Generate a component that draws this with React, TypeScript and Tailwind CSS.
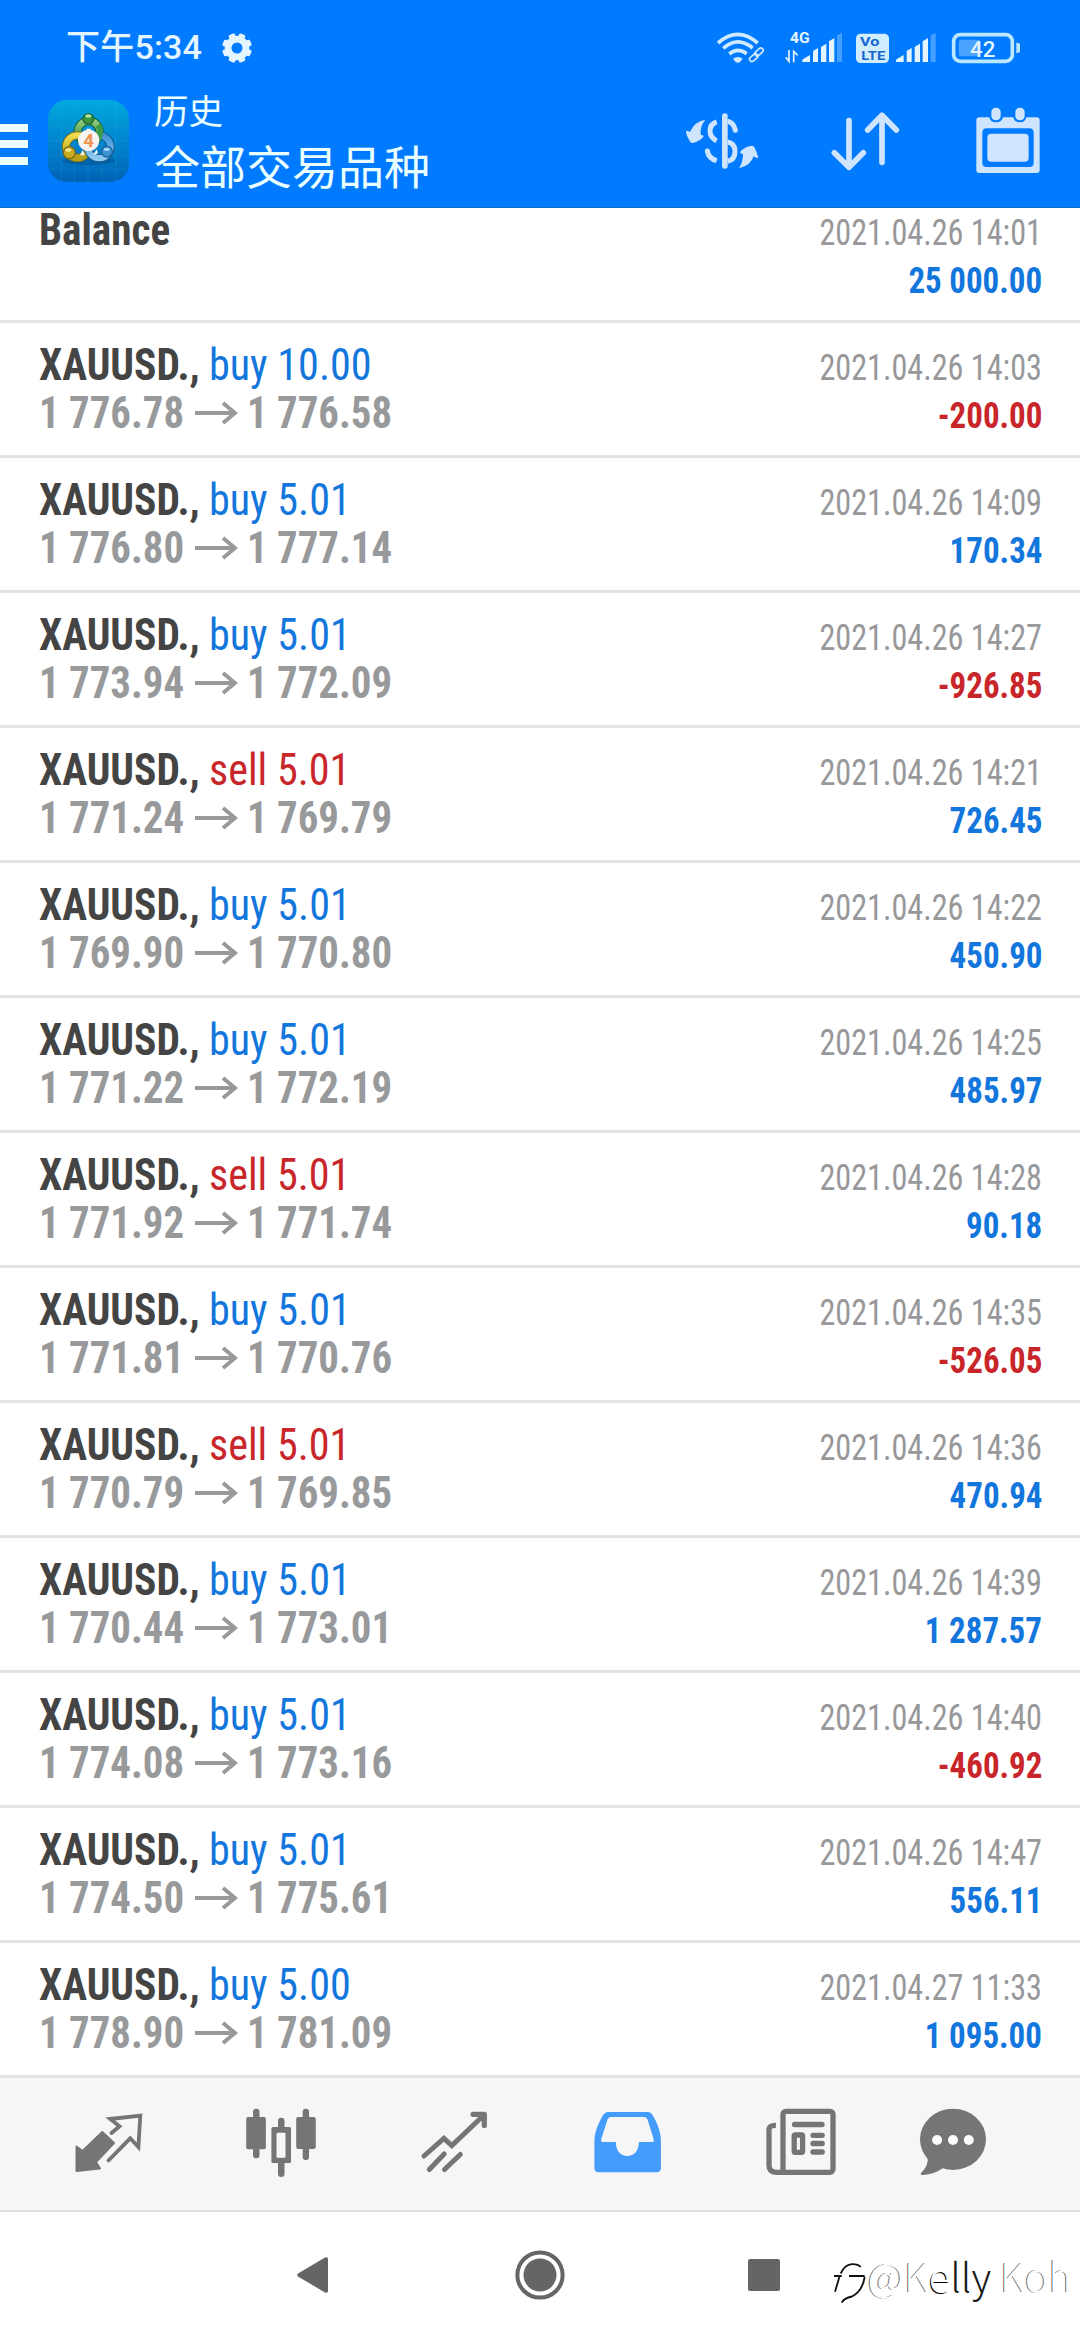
type Deal = {
  side: "buy" | "sell";
  volume: string;
  open: string;
  close: string;
  time: string;
  profit: string;
};

const deals: Deal[] = [
  { side: "buy", volume: "10.00", open: "1 776.78", close: "1 776.58", time: "2021.04.26 14:03", profit: "-200.00" },
  { side: "buy", volume: "5.01", open: "1 776.80", close: "1 777.14", time: "2021.04.26 14:09", profit: "170.34" },
  { side: "buy", volume: "5.01", open: "1 773.94", close: "1 772.09", time: "2021.04.26 14:27", profit: "-926.85" },
  { side: "sell", volume: "5.01", open: "1 771.24", close: "1 769.79", time: "2021.04.26 14:21", profit: "726.45" },
  { side: "buy", volume: "5.01", open: "1 769.90", close: "1 770.80", time: "2021.04.26 14:22", profit: "450.90" },
  { side: "buy", volume: "5.01", open: "1 771.22", close: "1 772.19", time: "2021.04.26 14:25", profit: "485.97" },
  { side: "sell", volume: "5.01", open: "1 771.92", close: "1 771.74", time: "2021.04.26 14:28", profit: "90.18" },
  { side: "buy", volume: "5.01", open: "1 771.81", close: "1 770.76", time: "2021.04.26 14:35", profit: "-526.05" },
  { side: "sell", volume: "5.01", open: "1 770.79", close: "1 769.85", time: "2021.04.26 14:36", profit: "470.94" },
  { side: "buy", volume: "5.01", open: "1 770.44", close: "1 773.01", time: "2021.04.26 14:39", profit: "1 287.57" },
  { side: "buy", volume: "5.01", open: "1 774.08", close: "1 773.16", time: "2021.04.26 14:40", profit: "-460.92" },
  { side: "buy", volume: "5.01", open: "1 774.50", close: "1 775.61", time: "2021.04.26 14:47", profit: "556.11" },
  { side: "buy", volume: "5.00", open: "1 778.90", close: "1 781.09", time: "2021.04.27 11:33", profit: "1 095.00" },
];

const gearTeeth = [22.5, 67.5, 112.5, 157.5, 202.5, 247.5, 292.5, 337.5];

const SignalBars = ({ x }: { x: number }) => (
  <g transform={`translate(${x} 0)`}>
    <path d="M0 186V182Q0 178 4 176L23 165V186Z" />
    <path d="M32 186V153L47 144V186Z" />
    <path d="M56 186V141L72 131V186Z" />
    <path d="M80 186V124L96 114V186Z" />
    <path d="M104 186V106L119 98V186Z" opacity=".3" />
  </g>
);

const StatusBar = () => (
  <div className="flex h-[94px] items-center pl-[66px] pr-[59px] text-[#e4f5ff]">
    <span className="font-['Roboto','Noto_Sans_CJK_SC',sans-serif] text-[34px] leading-none font-medium tracking-[0.2px]">下午5:34</span>
    <svg className="mt-[2px] ml-[19px] h-8 w-8" viewBox="-16 -16 32 32" fill="currentColor">
      <circle r="8.900" fill="none" stroke="currentColor" strokeWidth="6.800" />
      {gearTeeth.map((angle) => (
        <rect key={angle} x="-3.300" y="-14.900" width="6.600" height="5" rx="1.500" transform={`rotate(${angle})`} />
      ))}
    </svg>
    <div className="ml-auto flex items-center">
      <svg className="h-[34px] w-[49px]" viewBox="228 90 147 102" fill="none" stroke="#cfe9ff" strokeWidth="11">
        <path d="M234 129Q293 77 353 129M250 145Q293 107 338 144M268 162Q293 141 320 161" />
        <path d="M279 176Q293 166 308 176L300 186Q294 191 287 186Z" fill="#cfe9ff" stroke="none" />
        <g strokeWidth="5">
          <rect x="-14" y="-7" width="28" height="14" rx="7" transform="translate(341 173) rotate(-42)" />
          <rect x="-14" y="-7" width="28" height="14" rx="7" transform="translate(357 156) rotate(-42)" />
        </g>
      </svg>
      <svg className="ml-5 h-[34px] w-[58px]" viewBox="435 90 174 102" fill="currentColor">
        <text x="450" y="128" fontSize="44" fontWeight="700" fontFamily="Roboto" textLength="59" lengthAdjust="spacingAndGlyphs">4G</text>
        <path d="M447 150V184L437 172M461 187V154L473 166" fill="none" stroke="currentColor" strokeWidth="5" />
        <SignalBars x={487} />
      </svg>
      <svg className="ml-3 h-[34px] w-[35px]" viewBox="645 90 105 102" fill="#d0ecff">
        <rect x="648" y="101" width="99" height="88" rx="14" />
        <g fill="#1768cf" fontFamily="Roboto" fontWeight="700">
          <text x="660" y="139" fontSize="38" textLength="58" lengthAdjust="spacingAndGlyphs">Vo</text>
          <text x="664" y="180" fontSize="41" textLength="72" lengthAdjust="spacingAndGlyphs">LTE</text>
        </g>
      </svg>
      <svg className="ml-[5px] h-[34px] w-[42px]" viewBox="765 90 126 102" fill="currentColor">
        <SignalBars x={768} />
      </svg>
      <svg className="ml-[14px] h-[34px] w-[70px]" viewBox="933 90 210 102" fill="#b9e8ff">
        <rect x="941" y="104" width="176" height="80" rx="20" fill="none" stroke="#b9e8ff" strokeWidth="11" />
        <rect x="956" y="119" width="64" height="50" rx="7" fill="#4ba3ff" />
        <path d="M1129 128H1133Q1140 128 1140 135V152Q1140 159 1133 159H1129Z" />
        <text x="990" y="170" fontSize="65" fontWeight="500" fontFamily="Roboto" fill="#e4f5ff" textLength="76" lengthAdjust="spacingAndGlyphs">42</text>
      </svg>
    </div>
  </div>
);

const AppLogo = () => (
  <svg className="ml-5 h-[82px] w-[81px]" viewBox="0 0 243 246">
    <defs>
      <linearGradient id="tile" x1="0" y1="0" x2="0" y2="1">
        <stop offset="0" stopColor="#00a9de" />
        <stop offset=".55" stopColor="#0082cc" />
        <stop offset="1" stopColor="#0062b4" />
      </linearGradient>
      <linearGradient id="green" x1="0" y1="0" x2="0" y2="1">
        <stop offset="0" stopColor="#93c97c" />
        <stop offset="1" stopColor="#2f8a35" />
      </linearGradient>
      <linearGradient id="yellow" x1="0" y1="0" x2="0" y2="1">
        <stop offset="0" stopColor="#eedb4e" />
        <stop offset="1" stopColor="#b8a018" />
      </linearGradient>
      <linearGradient id="blue" x1="0" y1="0" x2="0" y2="1">
        <stop offset="0" stopColor="#3d93d5" />
        <stop offset="1" stopColor="#8cc8f0" />
      </linearGradient>
    </defs>
    <rect width="243" height="246" rx="56" fill="url(#tile)" />
    <path d="M40 3V243M79 0V246M120 0V246M162 0V246M203 3V243M0 79H243M0 122H243M0 166H243M8 208H235" stroke="#3cc0e8" strokeOpacity=".25" strokeWidth="2" />
    <ellipse cx="122" cy="182" rx="80" ry="13" fill="#003c78" opacity=".35" />
    <g fill="none" strokeWidth="25">
      <circle cx="122" cy="96" r="33" stroke="#185f32" />
      <circle cx="122" cy="96" r="33" stroke="url(#green)" strokeWidth="19" />
      <circle cx="88" cy="140" r="34" stroke="#77701c" />
      <circle cx="88" cy="140" r="34" stroke="url(#yellow)" strokeWidth="19" />
      <path d="M160 107A34 34 0 1 1 120 146" stroke="#145a8c" />
      <path d="M160 107A34 34 0 1 1 120 146" stroke="url(#blue)" strokeWidth="19" />
      <path d="M150 75A33 33 0 0 1 150 116" stroke="#3b9a45" strokeWidth="17" />
    </g>
    <path d="M96 165L104 150L110 166ZM136 164L146 148L150 160ZM114 86H130L122 96Z" fill="#f2f6fa" />
    <circle cx="121" cy="57" r="16" fill="#39963c" stroke="#1d6736" strokeWidth="4" />
    <ellipse cx="121" cy="48" rx="9" ry="5" fill="#b8e2a6" />
    <circle cx="64" cy="158" r="18" fill="#c9ab20" stroke="#7b6c19" strokeWidth="4" />
    <ellipse cx="61" cy="150" rx="9" ry="5" fill="#f6ea90" />
    <circle cx="177" cy="155" r="16" fill="#3d93d5" stroke="#1d6299" strokeWidth="4" />
    <ellipse cx="176" cy="148" rx="9" ry="5" fill="#a8d8f8" />
    <circle cx="122" cy="121" r="32" fill="#f7f3f0" />
    <text x="122" y="141" textAnchor="middle" fontFamily="Roboto" fontSize="56" fontWeight="700" fill="#ee9350">4</text>
  </svg>
);

const Toolbar = () => (
  <div className="mt-[2px] flex h-[90px] items-center pr-10 font-['Noto_Sans_CJK_SC',sans-serif] text-[#eaffff]">
    <div className="mt-[6px] flex h-[41px] w-[28px] flex-col justify-between">
      <span className="h-2 bg-[#eaffff]" />
      <span className="h-2 bg-[#eaffff]" />
      <span className="h-2 bg-[#eaffff]" />
    </div>
    <AppLogo />
    <div className="-mt-1 ml-[25px] flex flex-col">
      <span className="text-[34.500px] leading-[50px]">历史</span>
      <span className="text-[46px] leading-[60px]">全部交易品种</span>
    </div>
    <svg className="ml-auto h-[58px] w-[74px]" viewBox="135 334 222 174" fill="#cfe5ff">
      <rect x="246" y="338" width="17" height="166" rx="8" />
      <path d="M263 362Q280 365 286 388M263 424Q285 428 285 452Q285 478 263 482M230 364Q210 370 210 391Q210 411 230 420M202 451Q206 474 230 480" fill="none" stroke="#cfe5ff" strokeWidth="15" />
      <circle cx="286" cy="389" r="7.500" />
      <circle cx="202" cy="451" r="7.500" />
      <path d="M196 357Q180 376 182 402L189 404Q193 407 188 411Q174 424 156 427Q151 427 148 419Q139 404 138 394Q138 388 143 391L150 394Q162 363 196 357Z" />
      <path d="M297 503Q309 484 309 461L302 458Q299 455 303 450Q319 437 336 435Q341 435 344 442Q352 456 354 468Q354 474 349 471L341 467Q332 495 297 503Z" />
    </svg>
    <svg className="ml-[72px] h-[60px] w-[69px]" viewBox="572 333 207 180" fill="none" stroke="#cfe5ff" strokeWidth="17" strokeLinecap="round" strokeLinejoin="round">
      <path d="M626 362V502M582 458L626 502L669 458" />
      <path d="M725 487V346M682 390L725 346L768 390" />
    </svg>
    <svg className="ml-[76px] h-[68px] w-16" viewBox="1008 323 192 204" fill="#cfe5ff">
      <path
        fillRule="evenodd"
        d="M1018 354H1048Q1050 369 1068 369Q1086 369 1089 354H1120Q1122 369 1140 369Q1156 369 1159 354H1190Q1199 354 1199 363V512Q1199 521 1190 521H1018Q1009 521 1009 512V363Q1009 354 1018 354ZM1040 387Q1027 387 1027 400V490Q1027 503 1040 503H1168Q1181 503 1181 490V400Q1181 387 1168 387Z"
      />
      <rect x="1042" y="403" width="124" height="84" rx="12" />
      <rect x="1054" y="325" width="28" height="38" rx="13" />
      <rect x="1126" y="325" width="28" height="38" rx="13" />
    </svg>
  </div>
);

const profitColor = (profit: string) => (profit.startsWith("-") ? "text-[#c8262a]" : "text-[#1376dc]");

const Totals = ({ time, profit }: { time: string; profit: string }) => (
  <div className="-mb-[3px] flex flex-col items-end text-[36px] leading-[48px]">
    <span className="origin-right scale-x-[0.894] text-[#97989a]">{time}</span>
    <span className={`origin-right scale-x-[0.915] font-bold ${profitColor(profit)}`}>{profit}</span>
  </div>
);

const rowClass = "flex items-end justify-between border-b-[3px] border-[#e3e3e3] pr-[38px] pb-[18px] pl-[39px]";

const DealRow = ({ deal }: { deal: Deal }) => (
  <li className={`h-[135px] ${rowClass}`}>
    <div className="text-[44px] leading-[48px] whitespace-nowrap">
      <p className="flex">
        <span className="w-[170px] origin-left scale-x-[0.943] font-bold text-[#444444]">XAUUSD.,</span>
        <span className={`origin-left scale-x-[0.957] ${deal.side === "buy" ? "text-[#1376dc]" : "text-[#c8262a]"}`}>
          {deal.side} {deal.volume}
        </span>
      </p>
      <p className="flex items-center font-bold text-[#98999b]">
        <span className="w-[156px] origin-left scale-x-[0.928]">{deal.open}</span>
        <svg className="mr-[9px] h-6 w-[43px]" viewBox="0 0 43 24" fill="none" stroke="currentColor" strokeWidth="4">
          <path d="M0 12H40M28 2L40 12L28 22" />
        </svg>
        <span className="origin-left scale-x-[0.928]">{deal.close}</span>
      </p>
    </div>
    <Totals time={deal.time} profit={deal.profit} />
  </li>
);

const TabBar = () => (
  <nav className="flex h-[134px] items-center border-b-2 border-[#dedede] bg-[#f6f6f6] pl-[73px] text-[#757575]">
    <svg className="-mt-[2px] size-[70px]" viewBox="0 0 70 70">
      <path d="M3.500 38.500L9.600 43L29.300 24L41 35L23 54L27 60.500L3.500 63Z" fill="currentColor" stroke="currentColor" strokeWidth="2" strokeLinejoin="round" />
      <path d="M38.500 25L46.500 18.300L37.200 11L67.300 7.700L65.400 39L57.200 30.300L35.500 52.500" fill="none" stroke="currentColor" strokeWidth="3.800" strokeLinecap="round" />
    </svg>
    <svg className="-mt-[2px] ml-[103px] size-[70px]" viewBox="0 0 70 70" fill="currentColor">
      <rect x="7" y=".7" width="6.500" height="49.500" rx="3" />
      <rect x=".2" y="9" width="19.700" height="32.200" rx="2" />
      <path fillRule="evenodd" d="M27 19H43.500Q45 19 45 20.500V53.500Q45 55 43.500 55H27Q25.400 55 25.400 53.500V20.500Q25.400 19 27 19ZM31.500 24.700Q30.500 24.700 30.500 25.700V48.700Q30.500 49.700 31.500 49.700H38.500Q39.500 49.700 39.500 48.700V25.700Q39.500 24.700 38.500 24.700Z" />
      <path d="M32 20V13Q32 9.700 35.200 9.700Q38.500 9.700 38.500 13V20ZM32 54V66Q32 69 35.200 69Q38.500 69 38.500 66V54Z" />
      <rect x="56.700" y=".7" width="6.300" height="51.300" rx="3" />
      <rect x="50.200" y="9" width="19.600" height="32" rx="2" />
    </svg>
    <svg className="-mt-[2px] ml-[104px] size-[70px]" viewBox="0 0 70 70" fill="none" stroke="currentColor" strokeWidth="5" strokeLinecap="round">
      <path d="M4 48L23.900 30.300L31.800 37.500L64 7" />
      <path d="M53 6.300H64.300V17.500" strokeLinejoin="round" strokeWidth="5.200" />
      <path d="M24.200 46L9.300 61.500M40.300 46.500L24.500 61.500" />
    </svg>
    <svg className="-mt-[2px] ml-[103px] size-[70px]" viewBox="0 0 70 70" fill="#449cfb">
      <path
        fillRule="evenodd"
        d="M15 4H55Q58 4 60 8C65 16 67.900 25 67.900 33V60Q67.900 64.300 63.500 64.300H6Q1.400 64.300 1.400 60V33C1.400 25 5 16 9.500 8Q12 4 15 4ZM17.500 9Q15.500 9 14.500 11.500L8.300 31Q7.500 34 10 34H22.800C22.800 43 28 48 34.300 48C41 48 45.800 43 45.800 34H59Q61.500 34 60.600 31L54.500 11.500Q53.500 9 51.500 9Z"
      />
    </svg>
    <svg className="-mt-[2px] ml-[103px] size-[70px]" viewBox="0 0 70 70" fill="none" stroke="currentColor" strokeWidth="5.300">
      <rect x="17" y="3.300" width="50" height="61" rx="3" />
      <path d="M9.900 17.300Q3 17 3 22V57Q3 64.300 10 64.300H20" />
      <path d="M28.500 16.500H56M47 27.300H56.200M47 35.500H56.200M47 44H56.200" strokeLinecap="round" />
      <rect x="28.200" y="27" width="8.400" height="17.300" rx="1" />
    </svg>
    <svg className="-mt-[2px] ml-[82px] size-[70px]" viewBox="0 0 70 70" fill="currentColor">
      <ellipse cx="35" cy="31.300" rx="33" ry="30.600" />
      <path d="M9.500 48Q11 58 3 65Q2 67 5 67Q17 66 25 60Z" />
      <g fill="#fbfbfb">
        <circle cx="19.100" cy="32" r="5" />
        <circle cx="35" cy="32" r="5" />
        <circle cx="50.800" cy="32" r="5" />
      </g>
    </svg>
  </nav>
);

const SystemNav = () => (
  <div className="relative flex h-32 items-center bg-white pl-[297px] text-[#656565]">
    <svg className="-mt-[2px] h-9 w-[31px]" viewBox="0 0 31 36" fill="currentColor">
      <path d="M1 16.500L28 .5Q31-.5 31 2V34Q31 36.500 28 35.500L1 19.500Q-.5 18 1 16.500Z" />
    </svg>
    <svg className="-mt-[2px] ml-[187px] size-[50px]" viewBox="0 0 50 50">
      <circle cx="25" cy="25" r="22.600" fill="none" stroke="currentColor" strokeWidth="4" />
      <circle cx="25" cy="25" r="16.500" fill="currentColor" />
    </svg>
    <span className="-mt-[2px] ml-[183px] size-8 rounded-[2px] bg-[#656565]" />
    {/* Watermark */}
    <div className="absolute top-[37px] right-[8px] flex items-start">
      <svg className="mt-[13px] h-[44px] w-[36px]" viewBox="0 0 36 44" fill="none" stroke="#111" strokeWidth="1.800">
        <path d="M3 29.700L7.700 14M2 14H9.700M8.700 11.500Q13 2.500 20 2.200Q26 2 28.700 5M17 14H32.700M32.700 15Q30.500 29 20 34.500Q12 36 9.700 40.700" />
      </svg>
      <span className="font-['Noto_Sans_CJK_SC',sans-serif] text-[40px] leading-[52px] font-light text-white [text-shadow:-1px_0_0_#666]">
        @K<span className="[text-shadow:-1px_1px_0_#000]">e</span>
        <span className="text-[#1a1a1a] [text-shadow:none]">lly</span> Koh
      </span>
    </div>
  </div>
);

export default function App() {
  return (
    <div className="flex h-[2340px] w-[1080px] flex-col overflow-hidden bg-white font-['Roboto_Condensed','Roboto',sans-serif]">
      <header className="h-[208px] border-b border-[#0f68c8] bg-[#007aff]">
        <StatusBar />
        <Toolbar />
      </header>
      <ul>
        <li className={`h-[115px] ${rowClass}`}>
          <span className="origin-left scale-x-[0.935] pb-12 text-[44px] leading-[48px] font-bold text-[#444444]">Balance</span>
          <Totals time="2021.04.26 14:01" profit="25 000.00" />
        </li>
        {deals.map((deal) => (
          <DealRow key={deal.time} deal={deal} />
        ))}
      </ul>
      <TabBar />
      <SystemNav />
    </div>
  );
}
